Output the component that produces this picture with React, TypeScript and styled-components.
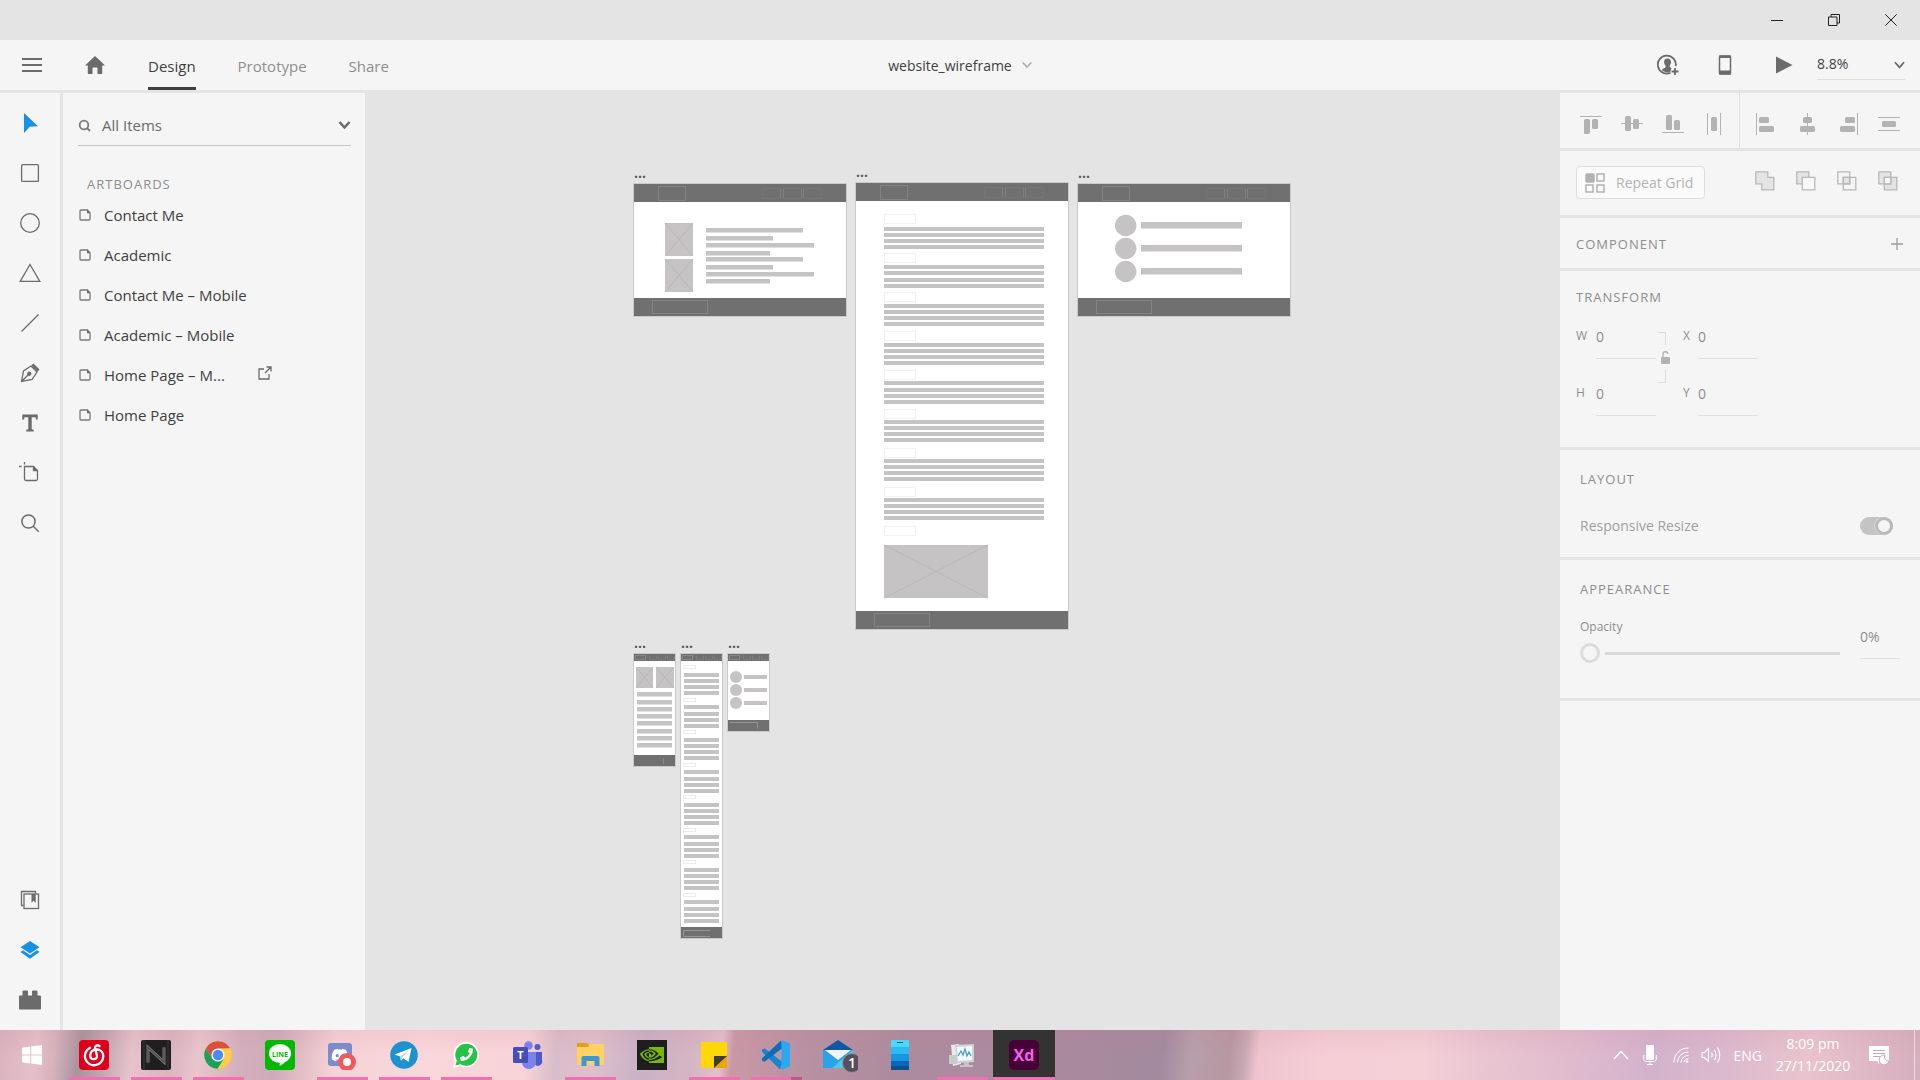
import React from "react";
import styled, { createGlobalStyle } from "styled-components";
import { SiNvidia } from "react-icons/si";
import { FaDiscord, FaPhoneAlt } from "react-icons/fa";

const c = {
  chrome: "#e4e4e4",
  panel: "#f5f5f5",
  icon: "#6b6b6b",
  text: "#3f3f3f",
  muted: "#8e8e8e",
  faint: "#b3b3b3",
  line: "#e0e0e0",
  blue: "#1592e6",
  bar: "#c4c4c4",
  dark: "#707070",
  pink: "#f26fb2",
};

const GlobalStyle = createGlobalStyle`
  *, *::before, *::after { box-sizing: border-box; }
  body { margin: 0; }
  body, button, input, select {
    font-family: "Open Sans", "Noto Sans", sans-serif;
    font-size: 15px;
    color: ${c.text};
  }
  svg { display: block; flex: none; }
`;

const Window = styled.div`
  display: flex;
  flex-direction: column;
  min-height: 100vh;
  background: ${c.chrome};
`;

const IconButton = styled.button<{ $w?: number; $h?: number; $color?: string }>`
  display: flex;
  align-items: center;
  justify-content: center;
  flex: none;
  width: ${(p) => p.$w ?? 40}px;
  height: ${(p) => p.$h ?? 40}px;
  padding: 0;
  border: 0;
  background: none;
  color: ${(p) => p.$color ?? c.icon};
`;

/* ---------- Title bar and header ---------- */

const TitleBar = styled.div`
  display: flex;
  justify-content: flex-end;
  height: 40px;
  padding-right: 1px;
`;

const Header = styled.header`
  display: grid;
  grid-template-columns: 1fr auto 1fr;
  height: 50px;
  background: ${c.panel};
`;

const HeaderStart = styled.div`
  display: flex;
  align-items: center;
  padding-left: 12px;
  gap: 23px;
`;

const Tabs = styled.nav`
  display: flex;
  align-self: stretch;
  gap: 42px;
  padding-left: 10px;
`;

const Tab = styled.button<{ $active?: boolean }>`
  display: flex;
  align-items: center;
  padding: 5px 0 0;
  border: 0;
  border-bottom: 3px solid ${(p) => (p.$active ? c.text : "transparent")};
  background: none;
  color: ${(p) => (p.$active ? c.text : c.muted)};
`;

const DocName = styled.button`
  display: flex;
  align-items: center;
  gap: 10px;
  padding: 0;
  border: 0;
  background: none;
  font-size: 14px;
`;

const HeaderEnd = styled.div`
  display: flex;
  align-items: center;
  justify-content: flex-end;
  padding-right: 15px;
`;

const ZoomField = styled.label`
  display: flex;
  align-items: center;
  width: 88px;
  height: 30px;
  border-bottom: 1px solid ${c.line};
  color: ${c.icon};
`;

const ZoomSelect = styled.select`
  flex: 1;
  min-width: 0;
  padding: 0 0 3px;
  appearance: none;
  border: 0;
  background: none;
  font-size: 14px;
`;

/* ---------- Workspace ---------- */

const Workspace = styled.main`
  display: flex;
  flex: 1;
  gap: 3px;
  padding-top: 3px;
`;

const ToolRail = styled.nav`
  display: flex;
  flex-direction: column;
  justify-content: space-between;
  flex: none;
  width: 60px;
  padding: 5px 0;
  background: ${c.panel};
`;

const ToolGroup = styled.div`
  display: flex;
  flex-direction: column;
`;

const Layers = styled.aside`
  flex: none;
  width: 302px;
  padding: 12px 14px 0 15px;
  background: ${c.panel};
`;

const SearchField = styled.div`
  display: flex;
  align-items: center;
  height: 41px;
  border-bottom: 1px solid #c6c6c6;
  color: ${c.icon};
`;

const SearchLabel = styled.label`
  display: flex;
  align-items: center;
  flex: 1;
  gap: 11px;
`;

const SearchInput = styled.input`
  width: 100%;
  min-width: 0;
  padding: 0;
  border: 0;
  background: none;
  color: ${c.icon};
  outline: none;
`;

const SectionTitle = styled.h2`
  margin: 0;
  font-size: 13px;
  line-height: 20px;
  font-weight: 400;
  letter-spacing: 1px;
  color: ${c.muted};
`;

const LayersHead = styled.div`
  padding: 28px 9px 1px;
`;

const LayerList = styled.ul`
  margin: 0;
  padding: 0;
  list-style: none;
`;

const LayerRow = styled.li`
  display: flex;
  align-items: center;
  gap: 13px;
  height: 40px;
  padding-left: 1px;
`;

const LayerName = styled.span<{ $clip?: boolean }>`
  width: ${(p) => (p.$clip ? "129px" : "auto")};
  white-space: nowrap;
`;

const Canvas = styled.section`
  position: relative;
  flex: 1;
  min-width: 0;
  margin: 0 -3px;
  overflow: hidden;
`;

const Board = styled.figure<{ $x: number; $y: number }>`
  position: absolute;
  left: ${(p) => p.$x}px;
  top: ${(p) => p.$y}px;
  display: flex;
  flex-direction: column-reverse;
  margin: 0;
`;

const BoardLabel = styled.figcaption`
  height: 19px;
  padding-left: 1px;
  font-size: 14px;
  line-height: 18px;
  font-weight: 700;
  color: #5a5a5a;
`;

/* ---------- Inspector ---------- */

const Inspector = styled.aside`
  display: flex;
  flex-direction: column;
  flex: none;
  gap: 3px;
  width: 360px;
`;

const Section = styled.section<{ $pad: string }>`
  padding: ${(p) => p.$pad};
  background: ${c.panel};
`;

const AlignRow = styled.section`
  display: flex;
  height: 55px;
  background: ${c.panel};
`;

const AlignGroup = styled.div`
  display: flex;
  align-items: center;
  padding: 7px 5px 0 10px;
  & + & {
    flex: 1;
    padding: 7px 0 0 5px;
    border-left: 1px solid ${c.line};
  }
`;

const SplitRow = styled.div`
  display: flex;
  align-items: center;
  justify-content: space-between;
`;

const BooleanGroup = styled.div`
  display: flex;
  padding-bottom: 3px;
`;

const RepeatButton = styled.button`
  display: flex;
  align-items: center;
  gap: 11px;
  height: 33px;
  padding: 0 11px 0 8px;
  border: 1px solid #dedede;
  border-radius: 4px;
  background: #fafafa;
  font-size: 14px;
  color: ${c.faint};
`;

const TransformGrid = styled.div`
  display: grid;
  grid-template-columns: 80px 27px 75px;
  align-items: start;
  padding-top: 14px;
`;

const FieldColumn = styled.div`
  display: grid;
  gap: 19px;
`;

const Field = styled.label<{ $lead: number }>`
  display: grid;
  grid-template-columns: ${(p) => p.$lead}px 60px;
  align-items: start;
  font-size: 12px;
  line-height: 30px;
  color: ${c.muted};
`;

const ValueInput = styled.input<{ $w: number }>`
  width: ${(p) => p.$w}px;
  height: 38px;
  padding: 0 0 6px;
  border: 0;
  border-bottom: 1px solid ${c.line};
  background: none;
  font-size: 14px;
  color: ${c.muted};
  outline: none;
`;

const Toggle = styled.input`
  appearance: none;
  display: flex;
  justify-content: flex-end;
  width: 33px;
  height: 18px;
  margin: 0;
  border-radius: 9px;
  background: #c4c4c4;
  &::before {
    content: "";
    width: 18px;
    height: 18px;
    border: 3px solid #bababa;
    border-radius: 50%;
    background: ${c.panel};
    box-shadow: -1px 0 0 #dadada;
  }
`;

const ToggleLabel = styled.label`
  display: flex;
  align-items: center;
  justify-content: space-between;
  padding-top: 25px;
  font-size: 14px;
  line-height: 24px;
  color: #a0a0a0;
`;

const OpacityRow = styled.div`
  display: flex;
  align-items: center;
  gap: 20px;
  padding-top: 18px;
`;

const OpacityLabel = styled.label`
  display: flex;
  flex-direction: column;
  flex: 1;
  gap: 6px;
  font-size: 12px;
  line-height: 20px;
  color: ${c.muted};
`;

const Slider = styled.input`
  appearance: none;
  width: 100%;
  height: 20px;
  margin: 0;
  background: none;
  &::-webkit-slider-runnable-track {
    height: 3px;
    background: linear-gradient(to right, transparent 25px, #dadada 25px);
  }
  &::-webkit-slider-thumb {
    appearance: none;
    width: 20px;
    height: 20px;
    margin-top: -9px;
    border: 3px solid #dcdcdc;
    border-radius: 50%;
    background: ${c.panel};
  }
`;

const InspectorRest = styled.div`
  flex: 1;
  background: ${c.panel};
`;

/* ---------- Taskbar ---------- */

const Taskbar = styled.footer`
  display: flex;
  height: 50px;
  color: #fff;
  background:
    linear-gradient(to bottom, rgba(200, 120, 140, 0.12), rgba(255, 235, 240, 0) 50%),
    linear-gradient(97deg,
      #d9b2be 0%, #e6c1c9 2%, #d5b2bc 3%, #a9939e 4.3%, #c5a7b2 5.6%, #e6c3cb 7%,
      #dbb4bf 9%, #e9c6cd 10.5%, #d4b0bd 12.5%, #cfabba 14.5%, #e4bfc8 16%,
      #f5d2d6 17.5%, #fad7db 22%, #f8d3d8 27.5%, #d9bdc9 29%, #dec0cc 31%,
      #c9b2c4 33.5%, #d5b5c4 36%, #e2bfcc 37.6%, #c998a5 38.2%, #b891a2 42%,
      #ac8b9d 47%, #a98a9d 55%, #a38a9e 60.5%, #b79faa 62%, #b697a2 64%,
      #c7a9b4 64.8%, #eec5cf 65.5%, #f5ced6 69%, #f5d0d7 74%, #eac6d2 77%,
      #e2bdcd 81%, #d3b2cc 86%, #dcbacd 90%, #e9c4ce 94%, #dfb9c6 97%, #d5afbd 100%);
`;

const TaskButton = styled.button<{ $w?: number; $mark?: "open" | "stack" | "active" }>`
  display: flex;
  align-items: center;
  justify-content: center;
  flex: none;
  width: ${(p) => p.$w ?? 62}px;
  height: 50px;
  padding: 0;
  border: 0;
  color: #fff;
  background:
    ${(p) =>
      p.$mark === "open"
        ? `linear-gradient(${c.pink}, ${c.pink}) 50% 100% / 51px 3px no-repeat`
        : p.$mark === "stack"
        ? `linear-gradient(to right, ${c.pink} 40px, #c2558f 40px) 50% 100% / 51px 3px no-repeat`
        : p.$mark === "active"
        ? `linear-gradient(${c.pink}, ${c.pink}) 50% 100% / 100% 3px no-repeat, #333`
        : "none"};
`;

const Tray = styled.div`
  display: flex;
  align-items: center;
  margin-left: auto;
  font-size: 14px;
`;

const Language = styled.span`
  padding: 0 12px 0 9px;
`;

const Clock = styled.time`
  width: 78px;
  line-height: 22px;
  text-align: center;
`;

const ShowDesktop = styled.div`
  width: 6px;
  height: 50px;
  margin-left: 8px;
  border-left: 1px solid rgba(255, 255, 255, 0.55);
`;

/* ---------- Small drawings ---------- */

type ArtProps = {
  w?: number;
  h?: number;
  vb?: string;
  sw?: number;
  fill?: string;
  stroke?: string;
  children: React.ReactNode;
};

const Art = ({ w = 20, h = w, vb, sw = 1.3, fill = "none", stroke = "currentColor", children }: ArtProps) => (
  <svg width={w} height={h} viewBox={vb ?? `0 0 ${w} ${h}`} fill={fill} stroke={stroke} strokeWidth={sw} aria-hidden="true">
    {children}
  </svg>
);

const Chevron = ({ w = 12, sw = 2 }: { w?: number; sw?: number }) => (
  <Art w={w} h={10} vb="0 0 12 10" sw={sw}>
    <path d="M1 2l5 5.5L11 2" />
  </Art>
);

const BoardIcon = () => (
  <Art w={12} h={12} stroke="#7a7a7a">
    <path d="M2 1h6.500L11 3.700V10a1 1 0 0 1-1 1H2a1 1 0 0 1-1-1V2a1 1 0 0 1 1-1z" />
    <path d="M8 .8l3.400 3.400H8z" fill="#6b6b6b" stroke="none" />
  </Art>
);

const tools: [string, React.ReactNode][] = [
  ["Select", <Art fill={c.blue} stroke="none"><path d="M4 0l14 13.200-8.200.6L4 20z" /></Art>],
  ["Rectangle", <Art><rect x="1.600" y="1.600" width="16.800" height="16.800" rx="1" /></Art>],
  ["Ellipse", <Art><circle cx="10" cy="10" r="9.300" /></Art>],
  ["Polygon", <Art w={22} h={20}><path d="M11 1.500L20.800 18.400H1.200z" /></Art>],
  ["Line", <Art><path d="M1.500 18.500l17-17" /></Art>],
  [
    "Pen",
    <Art>
      <path d="M1.500 18.500l2-10.500 7.500-5 6 6-5 7.500zM1.800 18.200l6.700-6.700" />
      <circle cx="9.300" cy="10.700" r="1.500" fill="currentColor" />
      <path d="M11.300 2.500L13.500.5l6 6-2 2.200z" fill="currentColor" stroke="none" />
    </Art>,
  ],
  [
    "Text",
    <Art fill="currentColor" stroke="none">
      <path d="M2.300 1.500h15.400v5h-1.700l-.5-2.200h-3.800v12l2 .5v1.700H6.300v-1.700l2-.5v-12H4.500L4 6.500H2.300z" />
    </Art>,
  ],
  [
    "Artboard",
    <Art w={22} h={22}>
      <path d="M5.500 0v2.500M0 4.500h2.500M5.500 4.500h9l4 4V17a1.500 1.500 0 0 1-1.500 1.500H7A1.500 1.500 0 0 1 5.500 17z" />
      <path d="M14.500 4.500v4h4" fill="currentColor" />
    </Art>,
  ],
  ["Zoom", <Art sw={1.5}><circle cx="8.500" cy="8.500" r="6.600" /><path d="M13.300 13.300l5.400 5.400" /></Art>],
];

const panels: [string, React.ReactNode][] = [
  [
    "Assets",
    <Art>
      <path d="M3.500 15.500h-2v-14h14v2" />
      <rect x="4" y="4" width="14.500" height="14.500" />
      <path d="M11.500 4h4.200v8.700l-2.100-1.900-2.100 1.900z" fill="currentColor" stroke="none" />
    </Art>,
  ],
  [
    "Layers",
    <Art fill={c.blue} stroke="none">
      <path d="M10 1l9.500 6.200L10 13.500.5 7.200z" />
      <path d="M.5 12l2.600-1.700L10 14.900l6.900-4.600 2.600 1.700L10 18.800z" />
    </Art>,
  ],
  [
    "Plugins",
    <Art w={22} h={20} fill="currentColor" stroke="none">
      <path d="M3.500 1.500a1 1 0 0 1 1-1h3.500a1 1 0 0 1 1 1V5.500h4v-4a1 1 0 0 1 1-1h3.500a1 1 0 0 1 1 1v4H21a1 1 0 0 1 1 1v12a1 1 0 0 1-1 1H1a1 1 0 0 1-1-1v-12a1 1 0 0 1 1-1h2.500z" />
    </Art>,
  ],
];

/* Each align glyph is a guide line with two rounded blocks. */
type Box = [number, number, number, number];
const alignIcons: { name: string; guides: Box[]; blocks: Box[] }[] = [
  { name: "Align top", guides: [[0, 4, 22, 1]], blocks: [[4, 7, 6, 15], [12, 7, 6, 10]] },
  { name: "Align middle", guides: [[0, 11, 22, 1]], blocks: [[4, 4, 6, 15], [12, 7, 6, 10]] },
  { name: "Align bottom", guides: [[0, 20, 22, 1]], blocks: [[4, 3, 6, 15], [12, 8, 6, 10]] },
  { name: "Distribute horizontally", guides: [[4, 1, 1, 22], [17, 1, 1, 22]], blocks: [[8, 5, 6, 14]] },
  { name: "Align left", guides: [[1, 1, 1, 22]], blocks: [[4, 5, 10, 6], [4, 14, 15, 6]] },
  { name: "Align centre", guides: [[11, 1, 1, 22]], blocks: [[7, 5, 9, 6], [4, 14, 15, 6]] },
  { name: "Align right", guides: [[20, 1, 1, 22]], blocks: [[8, 5, 10, 6], [3, 14, 15, 6]] },
  { name: "Distribute vertically", guides: [[0, 5, 22, 1], [0, 18, 22, 1]], blocks: [[4, 9, 14, 6]] },
];

const AlignButton = ({ icon }: { icon: (typeof alignIcons)[number] }) => (
  <IconButton $w={41} $color={c.faint} aria-label={icon.name}>
    <Art w={22} h={24} fill="currentColor" stroke="none">
      {icon.guides.map(([x, y, w, h]) => <rect key={`${x}-${y}`} x={x} y={y} width={w} height={h} />)}
      {icon.blocks.map(([x, y, w, h]) => <rect key={`${x}-${y}`} x={x} y={y} width={w} height={h} rx="1.500" />)}
    </Art>
  </IconButton>
);

const booleans: [string, React.ReactNode][] = [
  ["Add", <path d="M.8.800h12v5.500h6v12.500h-12v-6h-6z" fill="#e4e4e4" />],
  ["Subtract", <><path d="M.8.800h12v12h-12z" fill="#e4e4e4" /><path d="M6.300 6.300h12.500v12.500H6.300z" fill="#f7f7f7" /></>],
  ["Intersect", <><path d="M6.300 6.300h6.500v6.500H6.300z" fill="#e4e4e4" /><path d="M.8.800h12v12h-12zM6.300 6.300h12.500v12.500H6.300z" /></>],
  ["Exclude", <><path d="M.8.800h12v12h-12zM6.300 6.300h12.500v12.500H6.300z" fill="#e4e4e4" /><path d="M6.300 6.300h6.500v6.500H6.300z" fill="#f7f7f7" /></>],
];

/* ---------- Artboards ---------- */

const Placeholder = ({ x, y, w, h }: { x: number; y: number; w: number; h: number }) => (
  <g>
    <rect x={x} y={y} width={w} height={h} fill="#c5c3c4" />
    <path d={`M${x} ${y}l${w} ${h}M${x + w} ${y}l${-w} ${h}`} stroke="#b9b7b8" fill="none" />
  </g>
);

const Bars = ({ items, h }: { items: [number, number, number][]; h: number }) => (
  <>
    {items.map(([x, y, w]) => (
      <rect key={`${x}-${y}`} x={x} y={y} width={w} height={h} fill={c.bar} />
    ))}
  </>
);

type ArtboardProps = {
  name: string;
  x: number;
  y: number;
  h: number;
  mobile?: boolean;
  children: React.ReactNode;
};

const Artboard = ({ name, x, y, h, mobile, children }: ArtboardProps) => {
  const w = mobile ? 43 : 214;
  const head = mobile ? 7 : 18;
  const foot = mobile ? 11 : 18;
  return (
    <Board $x={x} $y={y - 19}>
      <svg width={w} height={h} viewBox={`0 0 ${w} ${h}`} role="img" aria-label={name}>
        <rect width={w} height={h} fill="#cacaca" />
        <rect x="1" y="1" width={w - 2} height={h - 2} fill="#fff" />
        <rect x="1" y="1" width={w - 2} height={head} fill={c.dark} />
        <rect x="1" y={h - 1 - foot} width={w - 2} height={foot} fill={c.dark} />
        {mobile ? (
          <g fill="none" stroke="#868686">
            <rect x="2.500" y="2.500" width="10" height="4" />
            <path d="M16.500 2.500v4h7v-4M25.500 2.500v4h7v-4M34.500 2.500v4h7v-4" stroke="#7d7d7d" />
          </g>
        ) : (
          <g fill="none" stroke="#838383">
            <rect x="25.500" y="3.500" width="27" height="14" />
            <path d="M129.500 5.500h18v10h-18zM150.500 5.500h18v10h-18zM170.500 5.500h18v10h-18z" stroke="#757575" />
            <path d="M147.500 6v9M150.500 6v9M168.500 6v9M170.500 6v9" stroke="#808080" />
            <rect x="19.500" y={h - 16.5} width="55" height="13" />
          </g>
        )}
        {children}
      </svg>
      <BoardLabel>...</BoardLabel>
    </Board>
  );
};

const eight = [0, 1, 2, 3, 4, 5, 6, 7];
const four = [0, 1, 2, 3];
const desktopWidths = [97, 67, 108, 64];
const desktopRows = [45, 53, 60, 68, 74, 82, 89, 96];
const mobileRows = [39, 47, 54, 61, 68, 76, 83, 90];

const Boards = () => (
  <>
    <Artboard name="Home Page" x={268} y={90} h={134}>
      <Placeholder x={32} y={40} w={28} h={33} />
      <Placeholder x={32} y={76} w={28} h={33} />
      <Bars h={4.5} items={desktopRows.map((y, i) => [73, y, desktopWidths[i % 4]])} />
    </Artboard>
    <Artboard name="Academic" x={490} y={89} h={448}>
      {[...eight, 8].map((i) => (
        <rect key={i} x="29.500" y={32.5 + 39 * i} width="31" height="9" fill="none" stroke="#f1f1f1" />
      ))}
      <Bars
        h={4}
        items={eight.flatMap((i) => four.map((j): [number, number, number] => [29, Math.round(44.6 + 38.7 * i + 6.1 * j), 160]))}
      />
      <Placeholder x={29} y={363} w={104} h={53} />
    </Artboard>
    <Artboard name="Contact Me" x={712} y={90} h={134}>
      {[42, 65, 88].map((y) => (
        <g key={y} fill="#c5c3c4">
          <circle cx="48.700" cy={y + 0.5} r="10.700" />
          <rect x="64" y={y - 3} width="101" height="6.500" />
        </g>
      ))}
    </Artboard>
    <Artboard name="Home Page – Mobile" x={268} y={560} h={114} mobile>
      <Placeholder x={3} y={14} w={17} h={21} />
      <Placeholder x={23} y={14} w={18} h={21} />
      <Bars h={4.5} items={mobileRows.map((y) => [4, y, 35])} />
      <path d="M30.500 105v6" stroke="#8c8c8c" />
    </Artboard>
    <Artboard name="Academic – Mobile" x={315} y={560} h={286} mobile>
      {eight.map((i) => (
        <rect key={i} x="3.500" y={12.5 + Math.round(32.5 * i)} width="12" height="3" fill="none" stroke="#ececec" />
      ))}
      <Bars
        h={4}
        items={eight.flatMap((i) => four.map((j): [number, number, number] => [4, Math.round(19.8 + 32.5 * i + 6.2 * j), 35]))}
      />
      <path d="M30 277.500H3.500v6H30" stroke="#969696" fill="none" />
    </Artboard>
    <Artboard name="Contact Me – Mobile" x={362} y={560} h={79} mobile>
      {[24, 37, 50].map((y) => (
        <g key={y} fill="#c5c3c4">
          <circle cx="9" cy={y} r="6" />
          <rect x="17" y={y - 2} width="23" height="4" />
        </g>
      ))}
      <path d="M3 69.500h27.500v6" stroke="#969696" fill="none" />
    </Artboard>
  </>
);

/* ---------- Taskbar logos ---------- */

const Tile = ({ bg, children, r = 4 }: { bg: string; children: React.ReactNode; r?: number }) => (
  <Art w={30} stroke="none">
    <rect width="30" height="30" rx={r} fill={bg} />
    {children}
  </Art>
);

const tasks: { name: string; mark?: "open" | "stack" | "active"; art: React.ReactNode }[] = [
  {
    name: "NetEase Music",
    mark: "open",
    art: (
      <Tile bg="#dd001b">
        <path
          d="M11 7.800A9.200 9.200 0 1 0 24.300 16c0-4-3-6.500-6.800-6.500-3.600 0-6.300 2.500-6.300 5.700 0 2.400 1.600 4 3.700 4 2.200 0 3.500-1.700 3-4L16 8.300c-.4-2.300 2-4 4.500-2.300"
          fill="none"
          stroke="#fff"
          strokeWidth="2.300"
          strokeLinecap="round"
        />
      </Tile>
    ),
  },
  {
    name: "Notes",
    mark: "open",
    art: (
      <Tile bg="#1f1f1f" r={2}>
        <path d="M3 0v30M27 0v30" stroke="#343434" />
        <path d="M7 22.500V7.500L23 22V7.500" stroke="#7b7b7b" strokeWidth="3" fill="none" />
        <path d="M7 22.500V7.500L23 22V7.500" stroke="#505050" strokeWidth="1.500" fill="none" />
      </Tile>
    ),
  },
  {
    name: "Chrome",
    mark: "open",
    art: (
      <Art w={30} stroke="none">
        <circle cx="15" cy="15" r="13.800" fill="#ffcd42" />
        <path d="M3 8.200A13.800 13.800 0 0 1 27 8.300L15 8.500 9 18.500z" fill="#d94f40" />
        <path d="M3 8.200A13.800 13.800 0 0 0 14.500 28.800L21 18.500H9z" fill="#1aa15f" />
        <circle cx="15" cy="15" r="6.600" fill="#f4f4f4" />
        <circle cx="15" cy="15" r="5.200" fill="#4a8af4" />
      </Art>
    ),
  },
  {
    name: "LINE",
    art: (
      <Tile bg="#00b900">
        <ellipse cx="15" cy="13.500" rx="11" ry="9.500" fill="#fff" />
        <path d="M11 21l4 .8-.5 4.200c4-2 8-5.500 9-9z" fill="#fff" />
        <text x="15" y="16.500" fontSize="7" fontWeight="700" textAnchor="middle" fill="#00b900">LINE</text>
      </Tile>
    ),
  },
  {
    name: "Discord",
    mark: "open",
    art: (
      <Art w={30} stroke="none">
        <rect x="1" y="3" width="24" height="23" rx="3" fill="#7b8bcd" />
        <FaDiscord x={4} y={6} size={18} color="#fff" />
        <circle cx="20" cy="22" r="9" fill="#f05a5e" />
        <circle cx="20" cy="22" r="4" fill="#fff" />
      </Art>
    ),
  },
  {
    name: "Telegram",
    mark: "open",
    art: (
      <Art w={30} stroke="none">
        <circle cx="15" cy="15" r="13.800" fill="#1c93cf" />
        <path d="M5.500 14.500L22.500 8l-3 14-5-3.700-2.500 2.500-.8-4.300z" fill="#fff" />
        <path d="M11.200 16.500l8.300-6-6 6.800-1.500 3.500z" fill="#b5d4e8" />
      </Art>
    ),
  },
  {
    name: "WhatsApp",
    mark: "open",
    art: (
      <Art w={30} stroke="none">
        <path d="M2 28l2-7A12.800 12.800 0 1 1 9 26z" fill="#fff" />
        <circle cx="15.300" cy="14.700" r="11" fill="#25c447" />
        <path d="M4.500 25.500l1.300-5 3.700 3.700z" fill="#25c447" />
        <g transform="translate(30 0) scale(-1 1)">
          <FaPhoneAlt x={8} y={8} size={13} color="#fff" />
        </g>
      </Art>
    ),
  },
  {
    name: "Teams",
    art: (
      <Art w={30} stroke="none">
        <circle cx="24.500" cy="7" r="3" fill="#5059c9" />
        <path d="M21 12h8v8a4 4 0 0 1-8 3z" fill="#5059c9" />
        <circle cx="15.500" cy="5.500" r="4.300" fill="#7b83eb" />
        <path d="M9 12h14v9a7 7 0 0 1-14 2z" fill="#7b83eb" />
        <rect x="0" y="7" width="15" height="16" rx="1.500" fill="#464eb8" />
        <text x="7.500" y="19" fontSize="11" fontWeight="700" textAnchor="middle" fill="#fff">T</text>
      </Art>
    ),
  },
  {
    name: "File Explorer",
    mark: "open",
    art: (
      <Art w={30} stroke="none">
        <path d="M2 4a1 1 0 0 1 1-1h9l2 2v5H2z" fill="#e2a014" />
        <path d="M2 7h11l2-3h13a1 1 0 0 1 1 1v20H2z" fill="#ffd262" />
        <path d="M6.500 26V18a2 2 0 0 1 2-2h14a2 2 0 0 1 2 2v8h-5v-5h-8v5z" fill="#3f96d0" />
      </Art>
    ),
  },
  {
    name: "NVIDIA",
    art: <Tile bg="#1e1e1e" r={0}><SiNvidia x={3} y={3} size={24} color="#76b900" /></Tile>,
  },
  {
    name: "Sticky Notes",
    mark: "open",
    art: (
      <Art w={30} stroke="none">
        <path d="M2 2h26v26H2z" fill="#ffd60a" />
        <path d="M15 28l13-13v13z" fill="#f2a600" />
        <path d="M15 28V16h13z" fill="#3f3b38" />
      </Art>
    ),
  },
  {
    name: "Visual Studio Code",
    mark: "stack",
    art: (
      <Art w={30} stroke="none">
        <path d="M21.500 22L3.500 8.200 1 9.500l-.2 2L19 29.500z" fill="#1687cf" />
        <path d="M21.500 8L3.500 21.800 1 20.500l-.2-2L20 .5z" fill="#0b6fb8" />
        <path d="M20.500 0L29 3.500v23L20.500 30z" fill="#29a9f2" />
      </Art>
    ),
  },
  {
    name: "Mail",
    art: (
      <Art w={40} h={36} stroke="none">
        <path d="M5 13L20 3l15 10z" fill="#0c59a4" />
        <path d="M5 13h30v18H5z" fill="#2ba3e8" />
        <path d="M7 13h26L20 23z" fill="#f3f3f3" />
        <path d="M35 13L14 31h21z" fill="#4fc8f5" />
        <circle cx="34" cy="26" r="9.500" fill="#55505a" stroke="#9a929a" strokeWidth="1" />
        <text x="34" y="31" fontSize="14" fontWeight="600" textAnchor="middle" fill="#fff">1</text>
      </Art>
    ),
  },
  {
    name: "Your Phone",
    art: (
      <Art w={30} stroke="none">
        <rect x="6" width="18" height="30" rx="1" fill="#46d9fa" />
        <path d="M6 7h18v7H6z" fill="#30b8f0" />
        <path d="M6 14h18v7H6z" fill="#1797e2" />
        <path d="M6 21h18v5H6z" fill="#0768bd" />
        <path d="M6 26h18v4H6z" fill="#134d8c" />
        <path d="M12 2h6v1h-6z" fill="#0b4f73" />
      </Art>
    ),
  },
  {
    name: "Resource Monitor",
    mark: "open",
    art: (
      <Art w={30} stroke="none">
        <path d="M4 5l8-1 2 20-8 2z" fill="#e9e9e9" />
        <path d="M2 15h8v9H2z" fill="#c9cbc9" />
        <path d="M8 5l19-1v18l-17 1z" fill="#cfd3d5" />
        <path d="M10 7l15-1v14l-14 1z" fill="#f3faff" />
        <path d="M11 16l3-5 2 4 2-6 2 7 2-4 2 4" stroke="#4d9cc9" fill="none" />
        <path d="M17 22h5v3h4v2H13v-2h4z" fill="#c4c6c6" />
      </Art>
    ),
  },
  {
    name: "Adobe XD",
    mark: "active",
    art: (
      <Tile bg="#470137" r={5}>
        <text x="15" y="21" fontSize="16" fontWeight="700" textAnchor="middle" fill="#f260ec">Xd</text>
      </Tile>
    ),
  },
];

export default function App() {
  return (
    <Window>
      <GlobalStyle />
      <TitleBar>
        <IconButton $w={57} aria-label="Minimise"><Art w={12} stroke="#222" sw={1}><path d="M0 6.500h12" /></Art></IconButton>
        <IconButton $w={57} aria-label="Restore">
          <Art w={12} stroke="#222" sw={1}><path d="M.5 3h8.500v8.500H.5zM3 3V.5h8.500V9H9" /></Art>
        </IconButton>
        <IconButton $w={57} aria-label="Close"><Art w={12} stroke="#222" sw={1}><path d="M.3.300l11.400 11.400M11.700.3L.3 11.700" /></Art></IconButton>
      </TitleBar>

      <Header>
        <HeaderStart>
          <IconButton aria-label="Menu">
            <Art sw={2} h={16}><path d="M0 2h20M0 8h20M0 14h20" strokeLinecap="butt" /></Art>
          </IconButton>
          <IconButton aria-label="Home">
            <Art fill="currentColor" stroke="none"><path d="M10 1L0 10.500h2.800V19h4.700v-5.500a1 1 0 0 1 1-1h3a1 1 0 0 1 1 1V19h4.700v-8.500H20l-3-3z" /></Art>
          </IconButton>
          <Tabs>
            <Tab $active>Design</Tab>
            <Tab>Prototype</Tab>
            <Tab>Share</Tab>
          </Tabs>
        </HeaderStart>
        <DocName>
          website_wireframe
          <Art w={10} stroke="#b0b0b0" sw={1.8}><path d="M.7 2.500L5 7l4.300-4.500" /></Art>
        </DocName>
        <HeaderEnd>
          <IconButton $w={64} aria-label="Invite">
            <Art w={22} sw={1.8}>
              <path d="M13.500 18.800A9 9 0 1 1 18.700 12" />
              <path d="M10.500 4.500c2.600 0 3.800 2 3.500 4.300-.2 1.500-1 2.300-1.300 3.200-.2 1 .5 1.500 1.800 2l-1 3.500c-2 1.300-5 1.200-7.500-.5-1-.8-1-1.600-.5-2 1.500-1 3.200-1 3.200-2.500 0-1-1.300-2-1.600-3.700-.4-2.300.8-4.300 3.400-4.300z" fill="currentColor" stroke="none" />
              <path d="M18 14v7M14.500 17.500h7" />
            </Art>
          </IconButton>
          <IconButton $w={50} aria-label="Preview on device">
            <Art w={14} h={20} sw={1.5}>
              <rect x="1.500" y="1" width="11" height="18" rx="1" />
              <path d="M1 15.500h12v4H1zM1 .5h12v2.500H1z" fill="currentColor" stroke="none" />
            </Art>
          </IconButton>
          <IconButton $w={67} aria-label="Play"><Art w={18} fill="currentColor" stroke="none"><path d="M1 .5L17.500 9 1 17.500z" /></Art></IconButton>
          <ZoomField>
            <ZoomSelect aria-label="Zoom level"><option>8.8%</option></ZoomSelect>
            <Chevron w={11} />
          </ZoomField>
        </HeaderEnd>
      </Header>

      <Workspace>
        <ToolRail>
          <ToolGroup>
            {tools.map(([name, art]) => <IconButton key={name} $w={60} $h={50} aria-label={name}>{art}</IconButton>)}
          </ToolGroup>
          <ToolGroup>
            {panels.map(([name, art]) => <IconButton key={name} $w={60} $h={50} aria-label={name}>{art}</IconButton>)}
          </ToolGroup>
        </ToolRail>

        <Layers>
          <SearchField>
            <SearchLabel>
              <Art w={13} sw={1.8} stroke="#7a7a7a"><circle cx="6" cy="6" r="4.300" /><path d="M9 9l3 3" /></Art>
              <SearchInput aria-label="Filter layers" defaultValue="All Items" />
            </SearchLabel>
            <IconButton $w={13} $h={24} aria-label="Choose filter"><Chevron w={13} sw={2.5} /></IconButton>
          </SearchField>
          <LayersHead><SectionTitle>ARTBOARDS</SectionTitle></LayersHead>
          <LayerList>
            {["Contact Me", "Academic", "Contact Me – Mobile", "Academic – Mobile", "Home Page – M...", "Home Page"].map((name) => {
              const hovered = name === "Home Page – M...";
              return (
                <LayerRow key={name}>
                  <BoardIcon />
                  <LayerName $clip={hovered}>{name}</LayerName>
                  {hovered && (
                    <IconButton $w={38} $h={38} aria-label="Export">
                      <Art w={14} h={18}><path d="M6 3H1v10h10V8M8.500 1H13v4.500M13 1L7 7" /></Art>
                    </IconButton>
                  )}
                </LayerRow>
              );
            })}
          </LayerList>
        </Layers>

        <Canvas aria-label="Canvas"><Boards /></Canvas>

        <Inspector>
          <AlignRow>
            <AlignGroup>{alignIcons.slice(0, 4).map((i) => <AlignButton key={i.name} icon={i} />)}</AlignGroup>
            <AlignGroup>{alignIcons.slice(4).map((i) => <AlignButton key={i.name} icon={i} />)}</AlignGroup>
          </AlignRow>

          <Section $pad="15px 12px 16px 16px">
            <SplitRow>
              <RepeatButton>
                <Art w={20} sw={1.5}>
                  <rect x="1" y="1" width="8" height="8" rx="1" fill="currentColor" />
                  <path d="M12 1h7v7h-7zM1 12h7v7H1zM12 12h7v7h-7z" />
                </Art>
                Repeat Grid
              </RepeatButton>
              <BooleanGroup>
                {booleans.map(([name, art]) => (
                  <IconButton key={name} $w={41} $h={30} $color="#b8b8b8" aria-label={name}>
                    <Art>{art}</Art>
                  </IconButton>
                ))}
              </BooleanGroup>
            </SplitRow>
          </Section>

          <Section $pad="16px 16px 14px">
            <SplitRow>
              <SectionTitle>COMPONENT</SectionTitle>
              <IconButton $w={14} $h={20} $color="#9c9c9c" aria-label="Make component">
                <Art w={14}><path d="M7 1v12M1 7h12" /></Art>
              </IconButton>
            </SplitRow>
          </Section>

          <Section $pad="16px 16px 31px">
            <SectionTitle>TRANSFORM</SectionTitle>
            <TransformGrid>
              <FieldColumn>
                <Field $lead={20}>W<ValueInput $w={60} defaultValue="0" /></Field>
                <Field $lead={20}>H<ValueInput $w={60} defaultValue="0" /></Field>
              </FieldColumn>
              <Art w={18} h={64} stroke="#dcdcdc" sw={1}>
                <path d="M2 11.500h7.500V24M9.500 49v12.500H2" />
                <rect x="5" y="36" width="9" height="7" rx="1" fill="#b3b3b3" stroke="none" />
                <path d="M7 36v-2.500a2.500 2.500 0 0 1 5-.5" stroke="#b3b3b3" strokeWidth="1.300" />
              </Art>
              <FieldColumn>
                <Field $lead={15}>X<ValueInput $w={60} defaultValue="0" /></Field>
                <Field $lead={15}>Y<ValueInput $w={60} defaultValue="0" /></Field>
              </FieldColumn>
            </TransformGrid>
          </Section>

          <Section $pad="19px 27px 19px 20px">
            <SectionTitle>LAYOUT</SectionTitle>
            <ToggleLabel>
              Responsive Resize
              <Toggle type="checkbox" defaultChecked />
            </ToggleLabel>
          </Section>

          <Section $pad="19px 20px 35px">
            <SectionTitle>APPEARANCE</SectionTitle>
            <OpacityRow>
              <OpacityLabel>
                Opacity
                <Slider type="range" min={0} max={100} defaultValue={0} />
              </OpacityLabel>
              <ValueInput $w={40} aria-label="Opacity value" defaultValue="0%" />
            </OpacityRow>
          </Section>
          <InspectorRest />
        </Inspector>
      </Workspace>

      <Taskbar>
        <TaskButton $w={63} aria-label="Start">
          <Art w={20} fill="#fff" stroke="none">
            <path d="M0 2.800l8.200-1.200v7.900H0zM9.200 1.400L20 0v9.500H9.200zM0 10.500h8.200v7.900L0 17.200zM9.200 10.500H20V20L9.200 18.600z" />
          </Art>
        </TaskButton>
        {tasks.map((t) => <TaskButton key={t.name} $mark={t.mark} aria-label={t.name}>{t.art}</TaskButton>)}
        <Tray>
          <IconButton $w={28} $color="#fff" aria-label="Hidden icons"><Art w={16} h={10}><path d="M1 9l7-7.500L15 9" /></Art></IconButton>
          <IconButton $w={30} $color="#fff" aria-label="Microphone">
            <Art w={14} h={20} sw={1}>
              <rect x="3" width="8" height="15" rx="1" fill="currentColor" stroke="none" />
              <path d="M.8 10v4.500c0 1 1 2 2.500 2h7.400c1.500 0 2.500-1 2.500-2V10M7 16.500v3M4 19.500h6" />
            </Art>
          </IconButton>
          <IconButton $w={32} $color="#fff" aria-label="Network">
            <Art w={16} sw={1}>
              <path d="M1 15.500A14 14 0 0 1 15.500 1M4.500 15.500A10.500 10.500 0 0 1 15.500 5M8 15.500A7 7 0 0 1 15.500 8.500M11 15.500a4 4 0 0 1 4.500-3.800" />
              <circle cx="14" cy="14.500" r="1.300" fill="currentColor" stroke="none" />
            </Art>
          </IconButton>
          <IconButton $w={28} $color="#fff" aria-label="Volume">
            <Art w={20} h={18} sw={1.1}>
              <path d="M1 6.500h2.500L7.500 2.500v13l-4-4H1zM10.500 6.500q1.500 2.500 0 5M13.500 4q3 5 0 10M16.500 1.500q4.500 7.500 0 15" />
            </Art>
          </IconButton>
          <Language>ENG</Language>
          <Clock>8:09 pm<br />27/11/2020</Clock>
          <IconButton $w={54} $color="#fff" aria-label="Notifications">
            <Art w={20} h={20} stroke="none">
              <path d="M0 1h20v15h-9l-1 3-2-3H0z" fill="#fff" />
              <path d="M4 5.500h12M4 8.500h12M4 11.500h8" stroke="#cfa5b7" strokeWidth="1.200" />
              <path d="M16 10a5 5 0 1 0 4 6 4 4 0 0 1-4-6z" fill="#fff" stroke="#cfa5b7" strokeWidth="1" />
            </Art>
          </IconButton>
          <ShowDesktop />
        </Tray>
      </Taskbar>
    </Window>
  );
}
